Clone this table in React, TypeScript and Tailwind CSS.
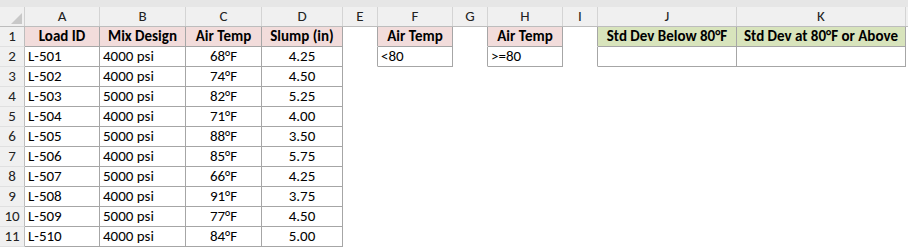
import React from "react";

const cols = ["A", "B", "C", "D", "E", "F", "G", "H", "I", "J", "K"];

type Cell = { t?: string; align?: "l" | "c"; bold?: boolean; bg?: string; border?: boolean };

const data: string[][] = [
  ["L-501", "4000 psi", "68°F", "4.25"],
  ["L-502", "4000 psi", "74°F", "4.50"],
  ["L-503", "5000 psi", "82°F", "5.25"],
  ["L-504", "4000 psi", "71°F", "4.00"],
  ["L-505", "5000 psi", "88°F", "3.50"],
  ["L-506", "4000 psi", "85°F", "5.75"],
  ["L-507", "5000 psi", "66°F", "4.25"],
  ["L-508", "4000 psi", "91°F", "3.75"],
  ["L-509", "5000 psi", "77°F", "4.50"],
  ["L-510", "4000 psi", "84°F", "5.00"],
];

function buildRows(): Cell[][] {
  const rows: Cell[][] = [];
  const pink = "bg-[#f2dcdb]";
  const green = "bg-[#d8e4bc]";
  const r1: Cell[] = [
    { t: "Load ID", bold: true, align: "c", bg: pink, border: true },
    { t: "Mix Design", bold: true, align: "c", bg: pink, border: true },
    { t: "Air Temp", bold: true, align: "c", bg: pink, border: true },
    { t: "Slump (in)", bold: true, align: "c", bg: pink, border: true },
    {},
    { t: "Air Temp", bold: true, align: "c", bg: pink, border: true },
    {},
    { t: "Air Temp", bold: true, align: "c", bg: pink, border: true },
    {},
    { t: "Std Dev Below 80°F", bold: true, align: "c", bg: green, border: true },
    { t: "Std Dev at 80°F or Above", bold: true, align: "c", bg: green, border: true },
  ];
  rows.push(r1);
  data.forEach((d, i) => {
    const r: Cell[] = [
      { t: d[0], align: "l", border: true },
      { t: d[1], align: "l", border: true },
      { t: d[2], align: "c", border: true },
      { t: d[3], align: "c", border: true },
    ];
    if (i === 0) {
      r.push({}, { t: "<80", align: "l", border: true }, {}, { t: ">=80", align: "l", border: true }, {}, { t: "", border: true }, { t: "", border: true });
    } else {
      for (let k = 0; k < 7; k++) r.push({});
    }
    rows.push(r);
  });
  return rows;
}

const widths = ["w-[75px]", "w-[86px]", "w-[76px]", "w-[81px]", "w-[35px]", "w-[75px]", "w-[35px]", "w-[75px]", "w-[35px]", "w-[139px]", "w-[169px]"];

export default function App() {
  const rows = buildRows();
  return (
    <div className="w-[908px] h-[248px] bg-white overflow-hidden text-black" style={{ fontFamily: "Carlito, Lato, 'Liberation Sans', sans-serif" }}>
      <div className="h-[7px] bg-[#e6e6e6]" />
      {/* column header */}
      <div className="flex h-[20px] bg-[#f0f0f0] border-b border-[#bdbdbd]">
        <div className="w-[25px] shrink-0 relative border-r border-[#d0d0d0]">
          <svg className="absolute right-[2px] bottom-[2px]" width="11" height="11" viewBox="0 0 11 11">
            <polygon points="11,0 11,11 0,11" fill="#c8c8c8" />
          </svg>
        </div>
        {cols.map((c, i) => (
          <div key={c} className={`${widths[i]} shrink-0 border-r border-[#d4d4d4] flex items-center justify-center text-[15px] text-[#222]`}>
            {c}
          </div>
        ))}
        <div className="flex-1" />
      </div>
      {rows.map((r, ri) => (
        <div key={ri} className="flex h-[20px]">
          <div className="w-[25px] shrink-0 bg-[#f0f0f0] border-r border-b border-[#bdbdbd] border-b-[#e0e0e0] flex items-center justify-center text-[15px] text-[#222]">
            {ri + 1}
          </div>
          {r.map((cell, ci) => {
            const next = r[ci + 1];
            const rightBorder = cell.border || (next && next.border);
            return (
              <div
                key={ci}
                className={`${widths[ci]} shrink-0 flex items-center text-[15px] leading-none whitespace-nowrap overflow-hidden ${cell.bg ?? ""} ${rightBorder ? "border-r border-[#a6a6a6]" : "border-r border-transparent"} ${cell.border ? "border-b border-b-[#a6a6a6]" : "border-b border-b-transparent"} ${cell.align === "c" ? "justify-center" : "justify-start pl-[3px]"} ${cell.bold ? "font-bold" : ""}`}
              >
                {cell.t}
              </div>
            );
          })}
          <div className="flex-1" />
        </div>
      ))}
    </div>
  );
}
